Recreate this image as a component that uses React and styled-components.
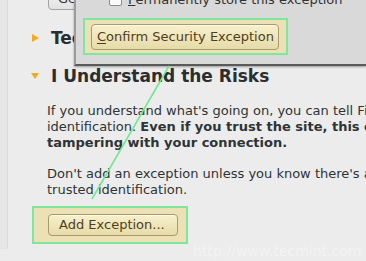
import React from 'react'
import styled, { createGlobalStyle } from 'styled-components'

const Global = createGlobalStyle`
html, body {
  margin: 0;
  padding: 0;
  background: #ececec;
}
body {
  font-family: "DejaVu Sans", Verdana, sans-serif;
  font-size: 13px;
  color: #2e3436;
}
`

const Page = styled.div`
position: relative;
width: 366px;
height: 261px;
overflow: hidden;
background: #ececec;
`

const Edge = styled.div`
height: 100%;
border-left: 7px solid #e6e6e6;
box-shadow: inset 1px 0 0 #dcdcdc;
padding-left: 24px;
box-sizing: border-box;
`

const TopButton = styled.div`
margin: -12px 0 0 17px;
width: 140px;
height: 22px;
box-sizing: border-box;
border: 1px solid #a3a3a3;
border-radius: 4px;
background: linear-gradient(#f6f6f6, #e2e2e2);
font-size: 13px;
line-height: 20px;
padding-left: 9px;
color: #333;
`

const Heading = styled.h2`
display: flex;
align-items: center;
margin: ${p => p.$top}px 0 0 0;
height: 22px;
font-size: 17px;
line-height: 22px;
font-weight: bold;
color: #2a2e30;
white-space: nowrap;
`

const Twisty = styled.span`
width: 20px;
flex: none;
display: flex;
align-items: center;
`

const Body = styled.div`
padding-left: 16px;
`

const Para = styled.p`
margin: ${p => p.$top}px 0 0 0;
line-height: 16px;
white-space: nowrap;
color: #2e3436;
& b {
  font-weight: bold;
}
`

const Highlight = styled.div`
display: inline-flex;
box-sizing: border-box;
border: 2px solid #7fe79b;
background: #ebe1b4;
`

const BodyHighlight = styled(Highlight)`
margin: 8px 0 0 -15px;
width: 156px;
height: 38px;
padding: 6px 0 0 14px;
`

const ExcButton = styled.div`
box-sizing: border-box;
height: 22px;
border: 1px solid #a89a6c;
border-radius: 4px;
background: linear-gradient(#f7f0cb, #e6dba9);
box-shadow: inset 0 1px 0 #fffbe6;
color: #4f3e1c;
font-size: 13px;
line-height: 20px;
padding: 0 12px 0 10px;
white-space: nowrap;
& u {
  text-decoration: underline;
  text-underline-offset: 2px;
}
`

const Dialog = styled.div`
position: absolute;
left: 74px;
top: 0;
right: 0;
height: 64px;
background: #d9d9d9;
border-left: 2px solid #9c9c9c;
border-bottom: 2px solid #5a5a5a;
box-shadow: 0 1px 2px rgba(0,0,0,0.35);
`

const CheckRow = styled.div`
display: flex;
align-items: center;
gap: 6px;
margin: -7px 0 0 33px;
height: 13px;
white-space: nowrap;
color: #333;
`

const CheckBox = styled.span`
width: 11px;
height: 11px;
flex: none;
border: 1px solid #8c8c8c;
border-radius: 2px;
background: #fafafa;
`

const DialogHighlight = styled(Highlight)`
margin: 12px 0 0 7px;
width: 205px;
height: 37px;
padding: 4px 0 0 6px;
`

const ConfirmButton = styled(ExcButton)`
height: 26px;
line-height: 24px;
padding: 0 4px 0 5px;
`

const Annotation = styled.svg`
position: absolute;
left: 0;
top: 0;
pointer-events: none;
`

const Watermark = styled.div`
position: absolute;
left: 193px;
top: 243px;
font-size: 14px;
color: rgba(255,255,255,0.4);
white-space: nowrap;
`

const Triangle = ({ open }) => (
  <svg width="8" height="8" viewBox="0 0 8 8">
    {open
      ? <polygon points="0,1 8,1 4,7" fill="#f2ab1c" />
      : <polygon points="1,0 8,4 1,8" fill="#f2ab1c" />}
  </svg>
)

const App = () => {
  return (
    <>
      <Global />
      <Page>
        <Edge>
          <TopButton>Get Certificate</TopButton>
          <Heading $top={17}><Twisty><Triangle /></Twisty>Technical Details</Heading>
          <Heading $top={16}><Twisty><Triangle open /></Twisty>I Understand the Risks</Heading>
          <Body>
            <Para $top={16}>
              If you understand what's going on, you can tell Firefox to start trusting this site's<br />
              identification. <b>Even if you trust the site, this error could mean that someone is</b><br />
              <b>tampering with your connection.</b>
            </Para>
            <Para $top={15}>
              Don't add an exception unless you know there's a good reason why this site doesn't use<br />
              trusted identification.
            </Para>
            <BodyHighlight>
              <ExcButton>Add Exception...</ExcButton>
            </BodyHighlight>
          </Body>
        </Edge>

        <Dialog>
          <CheckRow>
            <CheckBox />
            <span><u>P</u>ermanently store this exception</span>
          </CheckRow>
          <DialogHighlight>
            <ConfirmButton><u>C</u>onfirm Security Exception</ConfirmButton>
          </DialogHighlight>
        </Dialog>

        <Annotation width="366" height="261">
          <line x1="169" y1="66" x2="92" y2="199" stroke="#6fe88f" strokeWidth="1.5" />
        </Annotation>

        <Watermark>http://www.tecmint.com</Watermark>
      </Page>
    </>
  )
}

export default App
